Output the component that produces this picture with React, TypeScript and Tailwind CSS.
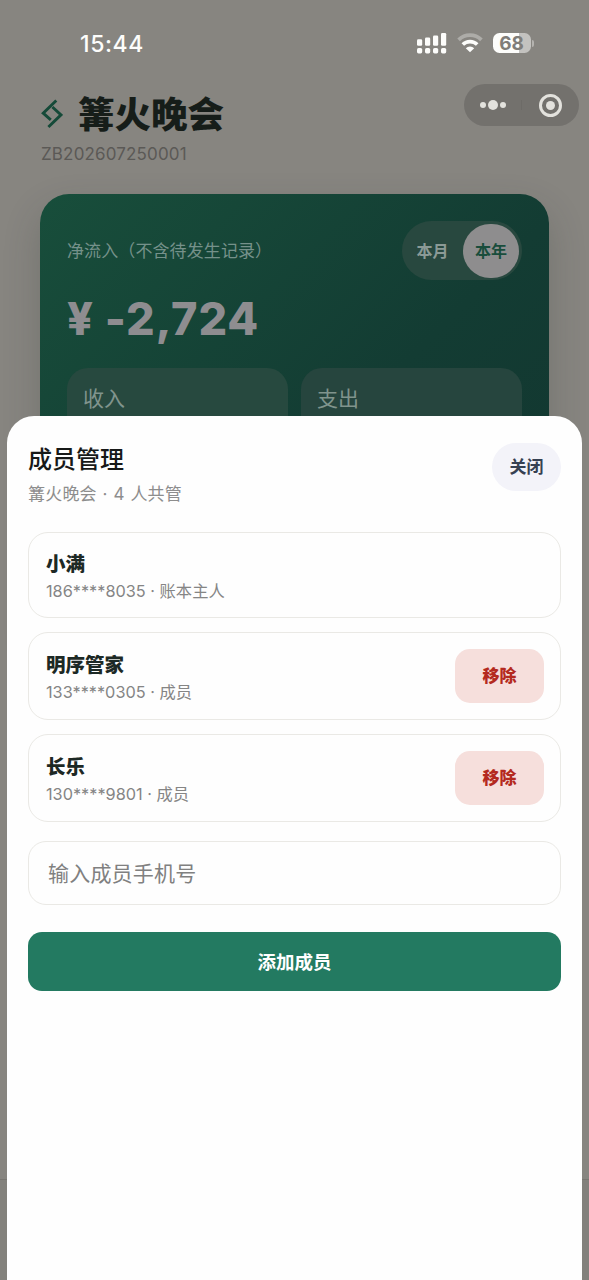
import React, { useState } from 'react';

const MEMBERS = [
  { name: '小满', phone: '186****8035', role: '账本主人', owner: true },
  { name: '明序管家', phone: '133****0305', role: '成员', owner: false },
  { name: '长乐', phone: '130****9801', role: '成员', owner: false },
];

const SignalIcon = () => (
  <svg width="30" height="21" viewBox="0 0 30 21" fill="#fdfdfb">
    <rect x="0" y="6.2" width="5.2" height="6.6" rx="1.3" />
    <rect x="8" y="4.4" width="5.2" height="8.4" rx="1.3" />
    <rect x="16" y="2.4" width="5.2" height="10.4" rx="1.3" />
    <rect x="24" y="0" width="5.2" height="12.8" rx="1.3" />
    <rect x="0" y="14.9" width="5.2" height="5.5" rx="1.6" />
    <rect x="8" y="14.9" width="5.2" height="5.5" rx="1.6" />
    <rect x="16" y="14.9" width="5.2" height="5.5" rx="1.6" />
    <rect x="24" y="14.9" width="5.2" height="5.5" rx="1.6" />
  </svg>
);

const WifiIcon = () => (
  <svg width="26" height="20" viewBox="0 0 26 20" fill="none">
    <path d="M1.6 6.8 A16.4 16.4 0 0 1 24.4 6.8" stroke="#adaca8" strokeWidth="3.8" />
    <path d="M5.8 11.6 A10.2 10.2 0 0 1 20.2 11.6" stroke="#fdfdfb" strokeWidth="3.6" />
    <path d="M13 19.2 L8.8 15.2 A5.8 5.8 0 0 1 17.2 15.2 Z" fill="#fdfdfb" />
  </svg>
);

const BatteryIcon = () => (
  <div className="flex items-center gap-[1px]">
    <div className="flex h-5 w-[38px] items-center justify-center rounded-[6.5px] bg-[linear-gradient(90deg,#fdfdfb_68%,#c3c2bf_68%)] text-[19px] leading-none font-bold text-[#7f7d79]">
      68
    </div>
    <div className="h-[7px] w-[2.5px] rounded-r-full bg-[#b4b3af]" />
  </div>
);

const LogoIcon = () => (
  <svg width="22" height="30" viewBox="0 0 22 30" fill="none" stroke="#154a38" strokeWidth="2.9">
    <path d="M15.3 1.5 L2.2 14.2 L9.8 20.8" />
    <path d="M11.4 8 L20 15.9 L7.4 28" />
  </svg>
);

const StatusBar = () => (
  <div className="flex h-[84px] items-start justify-between pt-[33px] pr-[55px] pl-20">
    <span className="text-[23px] leading-[23px] font-medium tracking-[0.6px] text-[#fdfdfb]">15:44</span>
    <div className="flex h-5 items-center gap-[10px]">
      <SignalIcon />
      <WifiIcon />
      <BatteryIcon />
    </div>
  </div>
);

const Capsule = () => (
  <div className="flex h-[42px] w-[115px] items-center rounded-full bg-[#73716d]">
    <div className="flex flex-1 items-center justify-center gap-[2px] border-r border-[#6d6b67]">
      <span className="size-[6px] rounded-full bg-[#e3e2dd]" />
      <span className="size-[10px] rounded-full bg-[#e3e2dd]" />
      <span className="size-[6px] rounded-full bg-[#e3e2dd]" />
    </div>
    <div className="flex flex-1 justify-center">
      <span className="flex size-[23px] items-center justify-center rounded-full border-[3px] border-[#e3e2dd]">
        <span className="size-[9px] rounded-full bg-[#e3e2dd]" />
      </span>
    </div>
  </div>
);

const SummaryCard: React.FC = () => {
  const [range, setRange] = useState('year');

  return (
    <div className="mx-[40px] h-[460px] rounded-[29px] bg-[linear-gradient(135deg,#184e3b_0%,#133c33_55%,#12352f_100%)] px-[27px] pt-[27px] shadow-[0_16px_36px_rgba(40,50,45,0.22)]">
      <div className="flex items-center justify-between">
        <span className="pt-[3px] text-[17px] tracking-[0.1px] text-[#75918a]">净流入（不含待发生记录）</span>
        <div className="flex h-[59px] w-[120px] items-center justify-end rounded-full bg-[#28483f] pr-[3px] text-[16px] font-bold">
          <button
            onClick={() => setRange('month')}
            className={`h-[54px] w-[61px] rounded-full ${range === 'month' ? 'bg-[#8e8d8e] text-[#194d3c]' : 'text-[#8b9a96]'}`}
          >
            本月
          </button>
          <button
            onClick={() => setRange('year')}
            className={`h-[54px] w-[56px] rounded-full ${range === 'year' ? 'bg-[#8e8d8e] text-[#194d3c]' : 'text-[#8b9a96]'}`}
          >
            本年
          </button>
        </div>
      </div>
      <div className="mt-[11px] text-[45px] leading-[56px] font-extrabold tracking-[0.9px] text-[#8e8d90]">¥ -2,724</div>
      <div className="mt-[21px] grid grid-cols-2 gap-[13px]">
        <div className="h-[120px] rounded-[21px] bg-[#27493f] px-4 pt-[15px] text-[21px] text-[#80948d]">收入</div>
        <div className="h-[120px] rounded-[21px] bg-[#26453e] px-4 pt-[15px] text-[21px] text-[#80948d]">支出</div>
      </div>
    </div>
  );
};

const MemberSheet: React.FC = () => {
  const [phone, setPhone] = useState('');

  return (
    <section className="absolute inset-x-[7px] top-[416px] bottom-0 rounded-t-[27px] bg-[#fefefe] px-[21px] pt-[27px]">
      <header className="flex items-start justify-between">
        <div className="pt-[1px]">
          <h2 className="text-[24px] leading-[32px] font-medium text-[#171918]">成员管理</h2>
          <p className="mt-[6px] text-[17px] leading-[24px] tracking-[0.2px] text-[#8d8d8d] [word-spacing:0.8px]">
            篝火晚会 · 4 人共管
          </p>
        </div>
        <button className="h-12 w-[69px] rounded-full bg-[#f3f3f9] pt-[2px] text-[17px] font-bold text-[#364152]">
          关闭
        </button>
      </header>

      <div className="mt-[26px] flex flex-col gap-[14px]">
        {MEMBERS.map((member) => (
          <div
            key={member.phone}
            className={`flex items-center justify-between rounded-[20px] border-[1.5px] border-[#eae9e5] px-4 ${member.owner ? 'h-[86px]' : 'h-[88px]'}`}
          >
            <div className="pt-[3px] pl-[1px]">
              <div className="text-[19.5px] leading-[28px] font-extrabold text-[#1d2925]">{member.name}</div>
              <div className="text-[16.3px] leading-[26px] text-[#858585]">
                {member.phone} · {member.role}
              </div>
            </div>
            {!member.owner && (
              <button className="h-[54px] w-[89px] rounded-[15px] bg-[#f6dfdc] pt-[2px] text-[17px] font-extrabold text-[#b42a20]">
                移除
              </button>
            )}
          </div>
        ))}
      </div>

      <input
        type="tel"
        value={phone}
        onChange={(e) => setPhone(e.target.value)}
        placeholder="输入成员手机号"
        className="mt-[19px] block h-[64px] w-full rounded-[18px] border-[1.5px] border-[#eae9e5] px-[19px] text-[21px] tracking-[0.2px] outline-none placeholder:text-[#808080]"
      />
      <button className="mt-[27px] h-[59px] w-full rounded-[14px] bg-[#237a61] pt-[2px] text-[18.5px] font-bold text-white">
        添加成员
      </button>
    </section>
  );
};

const App: React.FC = () => (
  <div className="relative h-[1280px] w-[589px] overflow-hidden bg-[#878580] font-['Inter','Noto_Sans_CJK_SC',sans-serif]">
    <StatusBar />
    <div className="flex h-[110px] items-start justify-between pr-[10px] pl-[41px]">
      <div className="pt-[8px]">
        <div className="flex items-center gap-[15px]">
          <LogoIcon />
          <h1 className="pt-[2px] text-[36.5px] leading-[42px] font-black text-[#161d19]">篝火晚会</h1>
        </div>
        <p className="mt-[7px] text-[17px] leading-[22px] tracking-[0.15px] text-[#5b5956]">ZB202607250001</p>
      </div>
      <Capsule />
    </div>
    <SummaryCard />
    {/* tab bar edge, visible only beside the sheet */}
    <div className="mt-[525px] h-[101px] border-t border-[#787671] bg-[#83817c]" />
    <MemberSheet />
  </div>
);

export default App;
